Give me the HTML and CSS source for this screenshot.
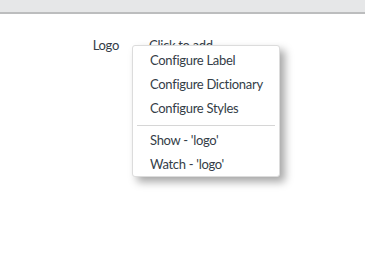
FILE: index.html
```html
<!DOCTYPE html>
<html lang="en">
<head>
    <meta charset="UTF-8">
    <title>Logo field</title>
    <link rel="stylesheet" href="styles.css">
</head>
<body>
    <div class="top-bar"></div>

    <div class="field-row">
        <span class="field-label">Logo</span>
        <span class="field-value">Click to add</span>
    </div>

    <!-- context menu for the field label -->
    <ul class="context-menu">
        <li>Configure Label</li>
        <li>Configure Dictionary</li>
        <li>Configure Styles</li>
        <li class="separator"></li>
        <li>Show - 'logo'</li>
        <li>Watch - 'logo'</li>
    </ul>
</body>
</html>
```

FILE: styles.css
```css
body {
    margin: 0;
    font-family: Lato, "Open Sans", sans-serif;
    font-size: 13px;
    letter-spacing: -0.3px;
    color: #343d47;
    background-color: #fff;
}
.top-bar {
    height: 12px;
    background-color: #e6e7e8;
    border-bottom: 2px solid #bcbdbe;
}
.field-row {
    display: flex;
    padding-top: 22px;
    line-height: 18px;
}
.field-label {
    width: 119px;
    text-align: right;
}
.field-value {
    margin-left: 30px;
}
.context-menu {
    position: absolute;
    left: 132px;
    top: 45px;
    width: 146px;
    margin: 0;
    padding: 2px 0 0;
    list-style: none;
    background-color: #fff;
    border: 1px solid #dcdcdc;
    border-radius: 3px;
    box-shadow: 5px 5px 8px rgba(0, 0, 0, 0.35);
}
.context-menu li {
    height: 24px;
    line-height: 24px;
    padding-left: 17px;
    white-space: nowrap;
}
.context-menu li.separator {
    height: 1px;
    margin: 5px 4px 2px;
    padding: 0;
    background-color: #d6d6d6;
}
```
